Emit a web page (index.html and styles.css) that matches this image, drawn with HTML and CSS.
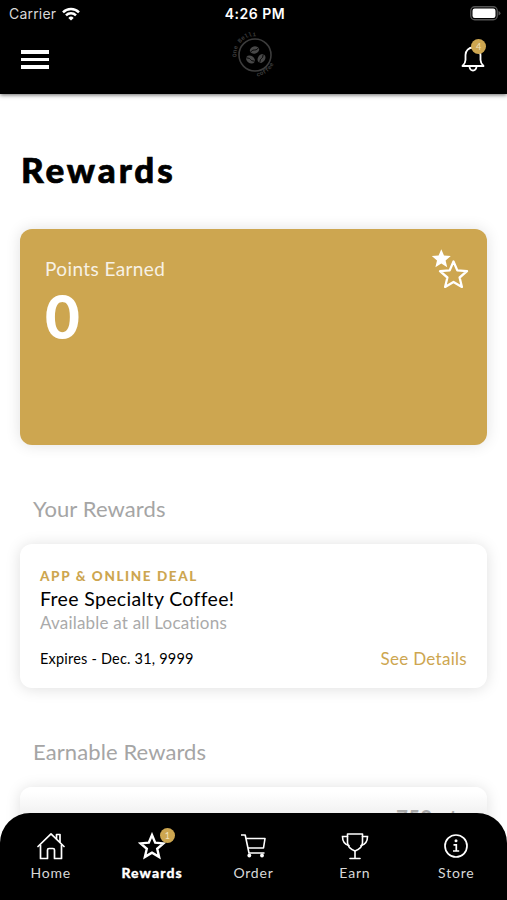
FILE: index.html
```html
<!DOCTYPE html>
<html lang="en">
<head>
  <meta charset="UTF-8">
  <meta name="viewport" content="width=device-width, initial-scale=1">
  <title>Rewards</title>
  <link rel="stylesheet" href="styles.css">
</head>
<body>
  <header class="topbar">
    <div class="status">
      <div class="carrier">
        <span>Carrier</span>
        <svg width="18" height="14" viewBox="0 0 18 14" fill="none" stroke="#fff" stroke-width="2.5">
          <path d="M1 5.3a11.4 11.4 0 0 1 16 0"/>
          <path d="M4 8.4a7.1 7.1 0 0 1 10 0"/>
          <path d="M9 13.5L6.3 10.900a3.900 3.900 0 0 1 5.400 0z" fill="#fff" stroke="none"/>
        </svg>
      </div>
      <div class="clock">4:26 PM</div>
      <svg class="battery" width="31" height="15" viewBox="0 0 31 15">
        <rect x=".75" y=".75" width="26.5" height="13" rx="4" fill="none" stroke="#555" stroke-width="1.3"/>
        <rect x="2.5" y="2.5" width="23" height="9.5" rx="2.2" fill="#fff"/>
        <path d="M28.5 5v4.5q2-.8 2-2.25T28.5 5z" fill="#555"/>
      </svg>
    </div>
    <div class="toolbar">
      <button class="menu" aria-label="Menu"><i></i><i></i><i></i></button>
      <svg class="logo" width="46" height="46" viewBox="0 0 46 46">
        <defs>
          <path id="arcTop" d="M4.5 25A18.500 18.500 0 0 1 38 12"/>
          <path id="arcBottom" d="M22 44.5A21.500 21.500 0 0 0 43.500 26"/>
        </defs>
        <circle cx="23" cy="23" r="16" fill="none" stroke="#3c3c3c" stroke-width="1.6"/>
        <g fill="#484848">
          <g transform="translate(22.5 18) rotate(-15)">
            <ellipse rx="4.7" ry="3.6"/>
            <path d="M-4.500 1Q-1-1 0 0T4.500-1" fill="none" stroke="#000" stroke-width=".8"/>
          </g>
          <g transform="translate(18.5 27.5) rotate(35)">
            <ellipse rx="4.7" ry="3.6"/>
            <path d="M-4.500 1Q-1-1 0 0T4.500-1" fill="none" stroke="#000" stroke-width=".8"/>
          </g>
          <g transform="translate(29.5 26.5) rotate(-55)">
            <ellipse rx="4.7" ry="3.6"/>
            <path d="M-4.500 1Q-1-1 0 0T4.500-1" fill="none" stroke="#000" stroke-width=".8"/>
          </g>
        </g>
        <text class="logo-text"><textPath href="#arcTop">One Belli</textPath></text>
        <text class="logo-text"><textPath href="#arcBottom" startOffset="3">coffee</textPath></text>
      </svg>
      <div class="bell">
        <svg width="24" height="28" viewBox="0 0 24 28" fill="none" stroke="#fff" stroke-width="1.8" stroke-linejoin="round">
          <path d="M1.500 22c2-2 3-3 3-6v-5a7.500 7.500 0 0 1 15 0v5c0 3 1 4 3 6z"/>
          <path d="M8.500 22.500a3.500 4 0 0 0 7 0"/>
        </svg>
        <span class="badge">4</span>
      </div>
    </div>
  </header>

  <main>
    <h1>Rewards</h1>

    <section class="points">
      <div>
        <div class="points-label">Points Earned</div>
        <div class="points-value">0</div>
      </div>
      <svg width="38" height="41" viewBox="0 0 38 41">
        <path d="M10.3.3l2.700 6.200 6.800.6-5.200 4.400 1.600 6.700-5.900-3.600-5.900 3.600L6 11.500.8 7.100l6.800-.6z" fill="#fff"/>
        <path d="M22.500 12.500l3.800 8.900 9.700.8-7.400 6.300 2.300 9.400-8.400-5-8.400 5 2.300-9.400L9 22.200l9.700-.8z" fill="none" stroke="#fff" stroke-width="2.3" stroke-linejoin="round"/>
      </svg>
    </section>

    <h2>Your Rewards</h2>
    <section class="card">
      <div class="deal">APP &amp; ONLINE DEAL</div>
      <div class="name">Free Specialty Coffee!</div>
      <div class="where">Available at all Locations</div>
      <div class="card-foot">
        <span class="expires">Expires - Dec. 31, 9999</span>
        <a class="details">See Details</a>
      </div>
    </section>

    <h2>Earnable Rewards</h2>
    <section class="card locked">
      <div class="cost">750 pts</div>
    </section>
  </main>

  <nav class="tabs">
    <a class="tab">
      <svg width="28" height="28" viewBox="0 0 28 28" fill="none" stroke="#fff" stroke-width="1.7" stroke-linejoin="round" stroke-linecap="round">
        <path d="M1 14.500L14 1.800l13 12.700"/>
        <path d="M3.500 13v13.500h7v-8.500a1.500 1.500 0 0 1 1.500-1.500h4a1.500 1.500 0 0 1 1.500 1.500v8.500h7V13"/>
        <path d="M19.500 6.500V2.500h3.500v7.500"/>
      </svg>
      <span>Home</span>
    </a>
    <a class="tab active">
      <svg width="28" height="28" viewBox="0 0 28 28" fill="none" stroke="#fff" stroke-width="2.4">
        <path d="M14 3l3.200 7.700 8.300.7-6.300 5.400 1.900 8.100-7.100-4.300-7.100 4.300 1.900-8.100-6.300-5.400 8.300-.7z"/>
      </svg>
      <b class="badge">1</b>
      <span>Rewards</span>
    </a>
    <a class="tab">
      <svg width="28" height="28" viewBox="0 0 28 28" fill="none" stroke="#fff" stroke-width="1.6" stroke-linejoin="round">
        <path d="M2 3h4.200l3.800 18h15.500"/>
        <path d="M7 6.500h19l-1.500 9.500H9"/>
        <circle cx="10.300" cy="23.500" r="1.900" fill="#fff" stroke="none"/>
        <circle cx="23" cy="23.500" r="1.900" fill="#fff" stroke="none"/>
      </svg>
      <span>Order</span>
    </a>
    <a class="tab">
      <svg width="28" height="28" viewBox="0 0 28 28" fill="none" stroke="#fff" stroke-width="1.6" stroke-linecap="round">
        <path d="M6.500 2h15v8.500q0 5.500-7.500 8.500-7.500-3-7.500-8.500z" stroke-linejoin="round"/>
        <path d="M6.500 4.500h-5q0 7.500 6.500 9M21.500 4.500h5q0 7.500-6.500 9M14 19v7.500M9 26.500h10"/>
      </svg>
      <span>Earn</span>
    </a>
    <a class="tab">
      <svg width="28" height="28" viewBox="0 0 28 28" fill="none" stroke="#fff" stroke-width="1.7">
        <circle cx="14" cy="14" r="11"/>
        <circle cx="14" cy="8.800" r="1.500" fill="#fff" stroke="none"/>
        <path d="M11.500 12.800h2.800v6M11 19h6.200"/>
      </svg>
      <span>Store</span>
    </a>
  </nav>
</body>
</html>
```
FILE: styles.css
```css
*{ box-sizing:border-box; }
body{
  margin:0;
  height:900px;
  display:flex;
  flex-direction:column;
  overflow:hidden;
  position:relative;
  background:#fff;
  color:#000;
  font-family:Lato, "Open Sans", sans-serif;
}
h1,h2{ margin:0; white-space:nowrap; }

/* top bar */
.topbar{
  flex:none;
  height:94px;
  background:#000;
  color:#fff;
  box-shadow:0 1px 4px rgba(0,0,0,.6);
}
.status{
  display:grid;
  grid-template-columns:1fr auto 1fr;
  align-items:center;
  height:27px;
  padding:0 6px 0 9px;
  font-family:Inter, sans-serif;
}
.carrier{
  display:flex;
  align-items:center;
  gap:6px;
  font-size:14px;
  letter-spacing:.2px;
  color:#d8d8d8;
}
.clock{ font-size:14px; font-weight:600; letter-spacing:.5px; }
.battery{ justify-self:end; }
.toolbar{
  display:grid;
  grid-template-columns:1fr auto 1fr;
  align-items:center;
  height:56px;
  padding:0 22px 0 21px;
}
.logo{ margin-left:3px; }
.menu{
  display:flex;
  flex-direction:column;
  gap:4px;
  width:28px;
  margin-top:9px;
  padding:0;
  border:0;
  background:none;
}
.menu i{ height:3.5px; width:28px; background:#fff; }
.logo-text{
  font-family:"Liberation Mono", monospace;
  font-size:6px;
  font-weight:bold;
  fill:#3c3c3c;
}
.bell{
  position:relative;
  justify-self:end;
  height:28px;
  margin-top:6px;
}
.badge{
  position:absolute;
  top:-5px;
  right:-1px;
  width:15px;
  height:15px;
  border-radius:50%;
  background:#cda650;
  color:#f3e3bd;
  font-size:9px;
  font-weight:400;
  line-height:15px;
  text-align:center;
}

/* content */
main{ flex:1; padding:53px 20px 0; }
h1{
  padding-left:1px;
  font-size:35px;
  font-weight:900;
  line-height:44px;
  letter-spacing:2.9px;
  -webkit-text-stroke:.7px #000;
}
.points{
  display:flex;
  justify-content:space-between;
  height:216px;
  margin-top:38px;
  padding:20px 18px 0 25px;
  border-radius:12px;
  background:#cda650;
  color:#fff;
  box-shadow:0 0 15px rgba(0,0,0,.12);
}
.points-label{ padding-top:7px; font-size:19px; line-height:26px; letter-spacing:.4px; opacity:.85; }
.points-value{ font-size:60px; font-weight:900; line-height:68px; }
h2{
  margin-top:49px;
  padding-left:13px;
  font-size:22px;
  font-weight:400;
  line-height:30px;
  letter-spacing:.1px;
  color:#a5a5a5;
}
.card{
  height:144px;
  margin-top:20px;
  padding:22px 20px 0;
  border-radius:12px;
  background:#fff;
  box-shadow:0 1px 15px rgba(0,0,0,.13);
}
.deal{
  font-size:13.5px;
  font-weight:900;
  line-height:20px;
  letter-spacing:1.6px;
  color:#cda650;
}
.name{ font-size:19.5px; line-height:25px; letter-spacing:.35px; }
.where{ font-size:17px; line-height:23px; letter-spacing:.2px; color:#aaa; }
.card-foot{
  display:flex;
  justify-content:space-between;
  align-items:center;
  margin-top:13px;
  line-height:24px;
}
.expires{ font-size:14.5px; letter-spacing:.2px; }
.details{ font-size:17px; letter-spacing:.3px; color:#cda650; }
.locked{ padding-top:15px; background:linear-gradient(#fff 5px,#f2f2f2 26px); }
.cost{
  font-size:20px;
  font-weight:900;
  line-height:30px;
  text-align:right;
  letter-spacing:.5px;
  color:#aaa;
}

/* bottom tabs */
.tabs{
  position:absolute;
  left:0;
  right:0;
  bottom:0;
  display:grid;
  grid-template-columns:repeat(5,1fr);
  height:87px;
  padding-top:19px;
  border-radius:30px 30px 0 0;
  background:#000;
}
.tab{
  position:relative;
  display:flex;
  flex-direction:column;
  align-items:center;
  color:#d8d8d8;
  font-size:14px;
  line-height:18px;
  letter-spacing:.8px;
}
.tab span{ margin-top:4px; }
.tab.active{ color:#fff; font-weight:900; letter-spacing:1.1px; -webkit-text-stroke:.3px #fff; }
.tab .badge{ top:-4px; right:28px; letter-spacing:0; -webkit-text-stroke:0; }
```
